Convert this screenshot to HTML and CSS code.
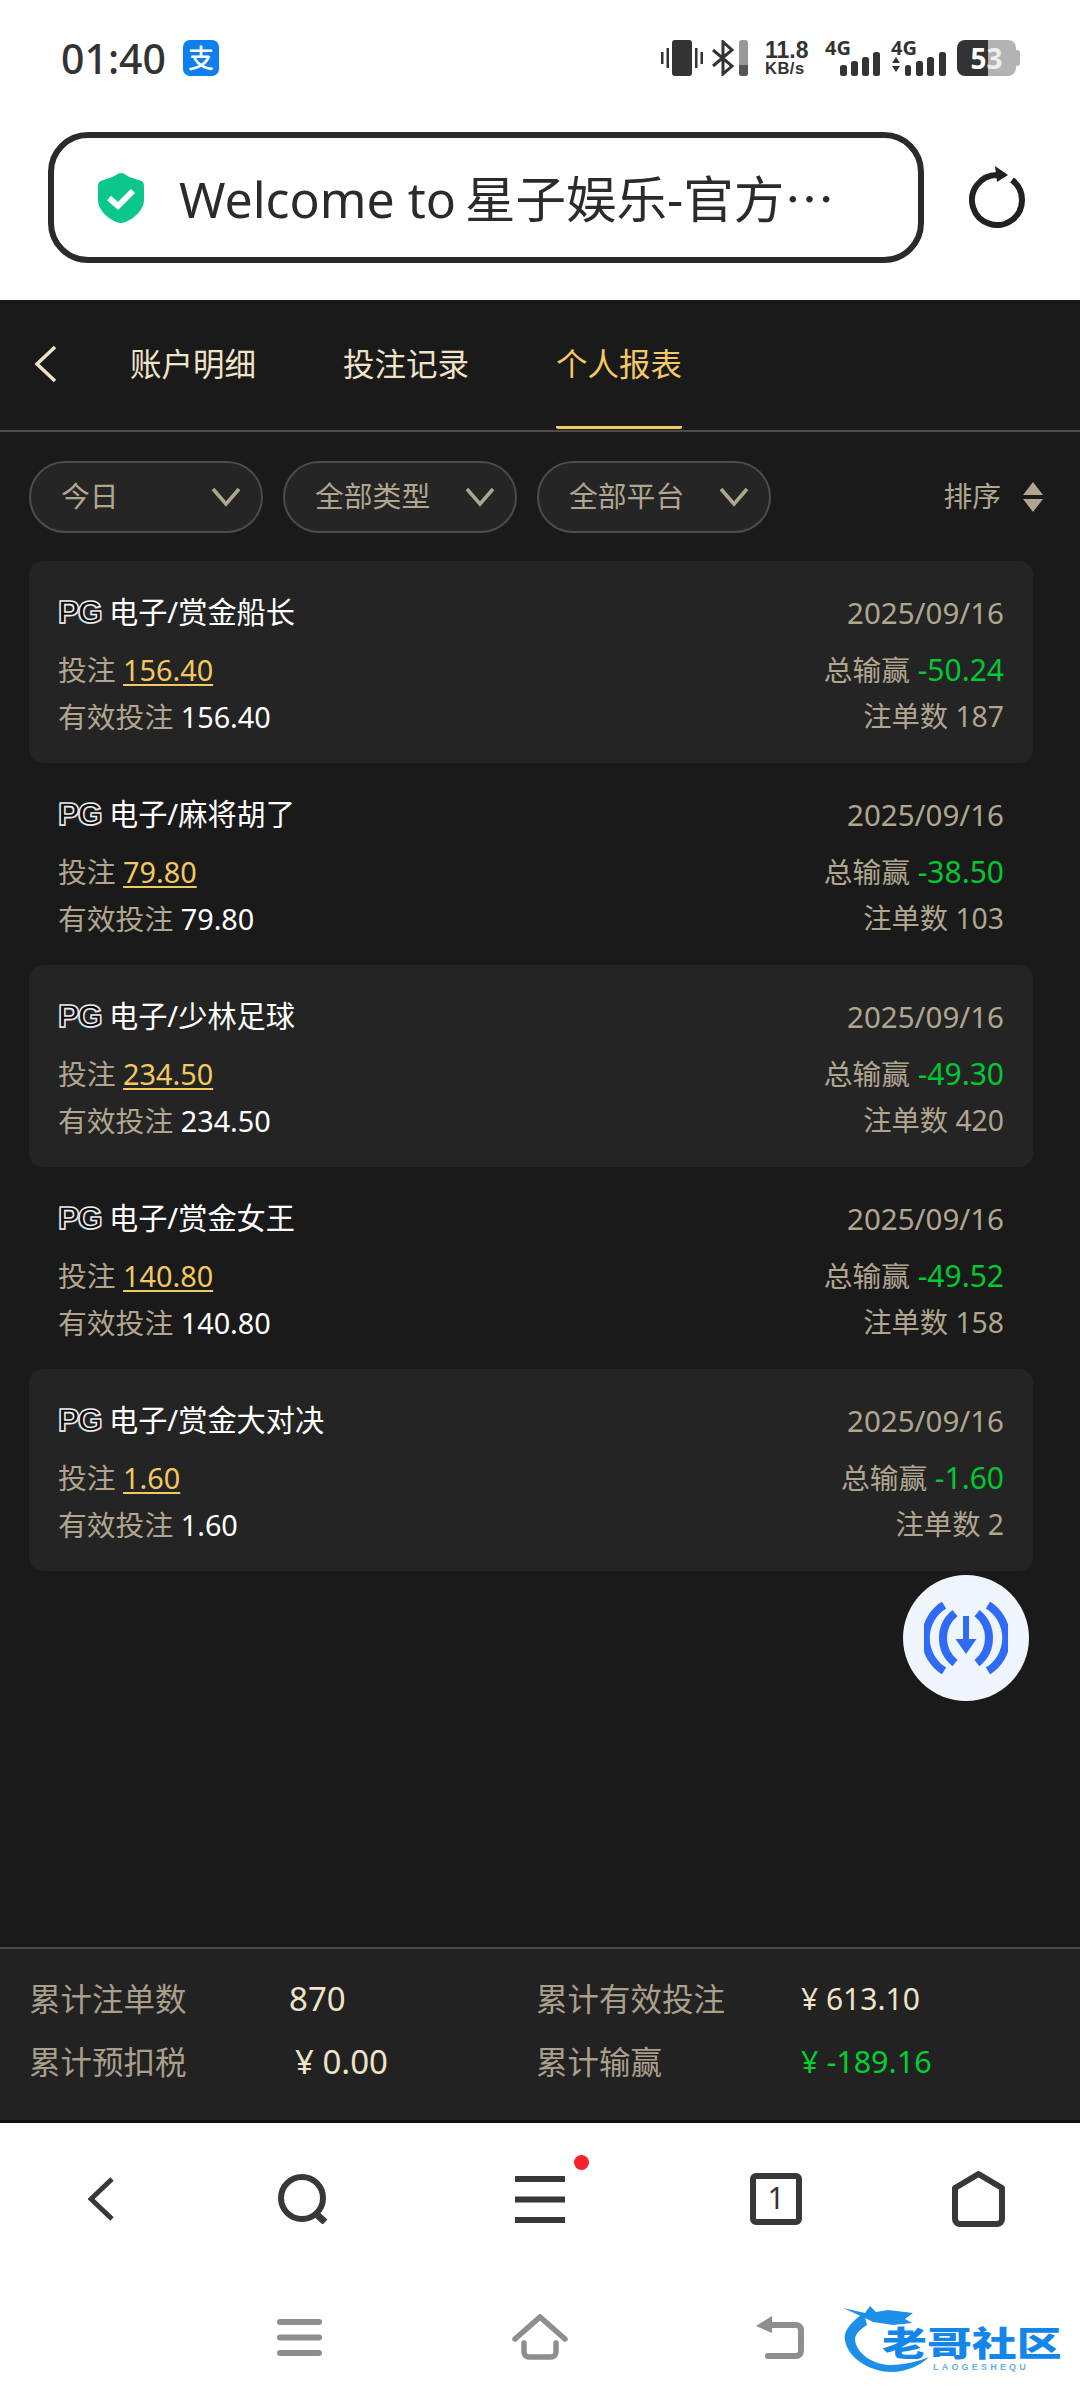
FILE: index.html
```html
<!DOCTYPE html>
<html lang="zh">
<head>
<meta charset="utf-8">
<title>个人报表</title>
<link rel="stylesheet" href="styles.css">
</head>
<body>
<div class="phone">
  <header class="status">
    <div class="status-left">
      <span class="time">01:40</span>
      <span class="alipay">支</span>
    </div>
    <div class="status-right">
      <svg class="ic-vib" width="42" height="36" viewBox="0 0 42 36"><rect x="11" y="0" width="20" height="36" rx="3" fill="#333"/><rect x="0" y="12" width="2.5" height="12" fill="#333"/><rect x="5.5" y="8" width="2.5" height="20" fill="#333"/><rect x="34" y="8" width="2.5" height="20" fill="#333"/><rect x="39.5" y="12" width="2.5" height="12" fill="#333"/></svg>
      <svg class="ic-bt" width="36" height="36" viewBox="0 0 36 36"><path d="M1 10 L20 26 L11 34 V2 L20 10 L1 26" fill="none" stroke="#333" stroke-width="3"/><rect x="27" y="0" width="9" height="36" rx="3" fill="#999"/><path d="M27 25 H36 V33 A3 3 0 0 1 33 36 H30 A3 3 0 0 1 27 33 Z" fill="#555"/></svg>
      <div class="speed"><span class="speed-num">11.8</span><span class="speed-unit">KB/s</span></div>
      <div class="sim sim-one">
        <span class="sim-label">4G</span>
        <svg class="sim-bars" width="40" height="24" viewBox="0 0 40 24"><rect x="0" y="13" width="7" height="11" rx="2.5" fill="#333"/><rect x="11" y="9" width="7" height="15" rx="2.5" fill="#333"/><rect x="22" y="5" width="7" height="19" rx="2.5" fill="#333"/><rect x="33" y="0" width="7" height="24" rx="2.5" fill="#333"/></svg>
      </div>
      <div class="sim sim-two">
        <span class="sim-label">4G</span>
        <svg class="sim-bars" width="55" height="24" viewBox="0 0 55 24"><path d="M1 11 L5 5 L9 11Z M1 14 H9 L5 20Z" fill="#333"/><rect x="14" y="13" width="6" height="11" rx="2.5" fill="#333"/><rect x="25" y="9" width="7" height="15" rx="2.5" fill="#333"/><rect x="36" y="5" width="7" height="19" rx="2.5" fill="#333"/><rect x="48" y="0" width="7" height="24" rx="2.5" fill="#333"/></svg>
      </div>
      <div class="battery"><span class="bat-five">5</span><span class="bat-three">3</span></div>
    </div>
  </header>

  <div class="urlrow">
    <div class="urlbox">
      <svg class="shield" width="46" height="50" viewBox="0 0 46 50"><path d="M23 0 C26 0 29 3 33 4.500 L42 7.500 C45 8.500 46 10 46 13 V27 C46 38 34 47 26 49.500 C24 50.200 22 50.200 20 49.500 C12 47 0 38 0 27 V13 C0 10 1 8.500 4 7.500 L13 4.500 C17 3 20 0 23 0Z" fill="#0cc78c"/><path d="M11 25 L20 33 L35 18" fill="none" stroke="#fff" stroke-width="6"/></svg>
      <span class="urltext">Welcome to<span class="url-cjk">星子娱乐-官方</span><span class="dots">⋯</span></span>
    </div>
    <svg class="reload" width="56" height="62" viewBox="0 0 56 62"><path d="M43 14 A25 25 0 1 1 28 9" fill="none" stroke="#222" stroke-width="6"/><path d="M26 0 L39 9 L28 16Z" fill="#222"/></svg>
  </div>

  <main class="app">
    <nav class="tabs">
      <svg class="tab-back" width="24" height="38" viewBox="0 0 24 38"><path d="M21 2 L3 19 L21 36" fill="none" stroke="#f0e4c4" stroke-width="3.500"/></svg>
      <span class="tab">账户明细</span>
      <span class="tab">投注记录</span>
      <span class="tab tab-active">个人报表</span>
    </nav>

    <div class="filters">
      <div class="pill"><span>今日</span><svg class="chev" width="30" height="20" viewBox="0 0 30 20"><path d="M2 2 L15 17 L28 2" fill="none" stroke="#b0a690" stroke-width="3.500"/></svg></div>
      <div class="pill"><span>全部类型</span><svg class="chev" width="30" height="20" viewBox="0 0 30 20"><path d="M2 2 L15 17 L28 2" fill="none" stroke="#b0a690" stroke-width="3.500"/></svg></div>
      <div class="pill"><span>全部平台</span><svg class="chev" width="30" height="20" viewBox="0 0 30 20"><path d="M2 2 L15 17 L28 2" fill="none" stroke="#b0a690" stroke-width="3.500"/></svg></div>
      <div class="sort"><span class="sort-text">排序</span><svg width="20" height="30" viewBox="0 0 20 30"><path d="M10 0 L20 13 H0Z M0 17 H20 L10 30Z" fill="#b0a690"/></svg></div>
    </div>

    <section class="list">
      <article class="card card-alt">
        <div class="row row-title"><div class="game"><span class="pg">PG</span><span>电子/赏金船长</span></div><span class="date">2025/09/16</span></div>
        <div class="row"><span>投注 <u class="bet">156.40</u></span><span>总输赢 <span class="loss">-50.24</span></span></div>
        <div class="row"><span>有效投注 <span class="valid">156.40</span></span><span class="count">注单数 187</span></div>
      </article>
      <article class="card">
        <div class="row row-title"><div class="game"><span class="pg">PG</span><span>电子/麻将胡了</span></div><span class="date">2025/09/16</span></div>
        <div class="row"><span>投注 <u class="bet">79.80</u></span><span>总输赢 <span class="loss">-38.50</span></span></div>
        <div class="row"><span>有效投注 <span class="valid">79.80</span></span><span class="count">注单数 103</span></div>
      </article>
      <article class="card card-alt">
        <div class="row row-title"><div class="game"><span class="pg">PG</span><span>电子/少林足球</span></div><span class="date">2025/09/16</span></div>
        <div class="row"><span>投注 <u class="bet">234.50</u></span><span>总输赢 <span class="loss">-49.30</span></span></div>
        <div class="row"><span>有效投注 <span class="valid">234.50</span></span><span class="count">注单数 420</span></div>
      </article>
      <article class="card">
        <div class="row row-title"><div class="game"><span class="pg">PG</span><span>电子/赏金女王</span></div><span class="date">2025/09/16</span></div>
        <div class="row"><span>投注 <u class="bet">140.80</u></span><span>总输赢 <span class="loss">-49.52</span></span></div>
        <div class="row"><span>有效投注 <span class="valid">140.80</span></span><span class="count">注单数 158</span></div>
      </article>
      <article class="card card-alt">
        <div class="row row-title"><div class="game"><span class="pg">PG</span><span>电子/赏金大对决</span></div><span class="date">2025/09/16</span></div>
        <div class="row"><span>投注 <u class="bet">1.60</u></span><span>总输赢 <span class="loss">-1.60</span></span></div>
        <div class="row"><span>有效投注 <span class="valid">1.60</span></span><span class="count">注单数 2</span></div>
      </article>
    </section>

    <div class="fab">
      <svg width="84" height="72" viewBox="0 0 84 72"><g fill="none" stroke="#2f6bf5" stroke-width="8"><path d="M20 3 A39 39 0 0 0 20 69"/><path d="M31 11 A32 32 0 0 0 31 61"/><path d="M64 3 A39 39 0 0 1 64 69"/><path d="M53 11 A32 32 0 0 1 53 61"/></g><path d="M39 14 H45 V37 H52.500 L42 52 L31.500 37 H39Z" fill="#2f6bf5"/></svg>
    </div>

    <footer class="totals">
      <span class="t-label">累计注单数</span><span class="t-val t-big">870</span><span class="t-label">累计有效投注</span><span class="t-val">¥ 613.10</span>
      <span class="t-label">累计预扣税</span><span class="t-val t-big t-tax">¥ 0.00</span><span class="t-label">累计输赢</span><span class="t-val t-loss">¥ -189.16</span>
    </footer>
  </main>

  <nav class="browser-nav">
    <div class="nav-cell"><svg width="26" height="44" viewBox="0 0 26 44"><path d="M24 2 L3 22 L24 42" fill="none" stroke="#383838" stroke-width="5"/></svg></div>
    <div class="nav-cell"><svg width="50" height="50" viewBox="0 0 50 50"><circle cx="24" cy="24" r="21" fill="none" stroke="#383838" stroke-width="6"/><path d="M36 38 L47 48" stroke="#383838" stroke-width="7"/></svg></div>
    <div class="nav-cell nav-menu"><svg width="50" height="47" viewBox="0 0 50 47"><path d="M0 3 H50 M0 23.500 H50 M0 44 H50" stroke="#383838" stroke-width="6"/></svg><span class="red-dot"></span></div>
    <div class="nav-cell"><div class="tabcount">1</div></div>
    <div class="nav-cell"><svg width="53" height="56" viewBox="0 0 53 56"><path d="M26.500 3 L50 17 V48 A5 5 0 0 1 45 53 H8 A5 5 0 0 1 3 48 V17Z" fill="none" stroke="#383838" stroke-width="6" stroke-linejoin="round"/></svg></div>
  </nav>

  <nav class="sys-nav">
    <div class="nav-cell"><svg width="45" height="37" viewBox="0 0 45 37"><path d="M3 3 H42 M3 18.500 H42 M3 34 H42" stroke="#8e8e8e" stroke-width="6" stroke-linecap="round"/></svg></div>
    <div class="nav-cell"><svg width="56" height="46" viewBox="0 0 56 46"><path d="M3 25 L28 3 L53 25" fill="none" stroke="#8e8e8e" stroke-width="5.500" stroke-linecap="round"/><path d="M12 29 V38 A5 5 0 0 0 17 43 H39 A5 5 0 0 0 44 38 V29" fill="none" stroke="#8e8e8e" stroke-width="5.500" stroke-linecap="round"/></svg></div>
    <div class="nav-cell"><svg width="48" height="43" viewBox="0 0 48 43"><path d="M16 9 H40 A5 5 0 0 1 45 14 V35 A5 5 0 0 1 40 40 H12" fill="none" stroke="#8e8e8e" stroke-width="6" stroke-linecap="round"/><path d="M16 0 V17 L0 10Z" fill="#8e8e8e"/></svg></div>
    <div class="logo">
      <svg class="logo-dragon" width="220" height="67" viewBox="0 0 220 67"><path d="M21 8 C6 18 0 28 2 35 C5 55 30 67 48 67 C64 67 78 60 86 52 C76 56 62 60 48 60 C32 60 14 50 12 35 C12 28 18 24 24 20Z" fill="#1e8fe8"/><path d="M0 3 L22 8 L27 1 L33 7 L45 5 L70 8 L62 14 L69 18 L50 20 L30 17 L20 12Z" fill="#1e8fe8"/></svg>
      <span class="logo-name">老哥社区</span>
      <span class="logo-sub">LAOGESHEQU</span>
    </div>
  </nav>
</div>
</body>
</html>
```
FILE: styles.css
```css
* { box-sizing: border-box; }
html, body { margin: 0; padding: 0; }
body { font-family: "Noto Sans", "Noto Sans CJK SC", sans-serif; background: #fff; }
.phone { position: relative; width: 1080px; height: 2400px; display: flex; flex-direction: column; overflow: hidden; }

.status { height: 116px; flex: none; display: flex; justify-content: space-between; padding: 40px 64px 0 61px; align-items: flex-start; }
.status-left { display: flex; align-items: center; gap: 17px; height: 36px; }
.time { font-size: 41px; font-weight: 500; color: #333; line-height: 36px; }
.alipay { width: 36px; height: 36px; border-radius: 7px; background: #0f7ff0; color: #fff; font-size: 26px; font-weight: 500; line-height: 36px; text-align: center; }
.status-right { display: flex; align-items: flex-start; height: 36px; }
.status-right svg { display: block; }
.ic-vib { margin-right: 9px; }
.speed { display: flex; flex-direction: column; width: 60px; margin-left: 17px; color: #333; font-family: "Liberation Sans", sans-serif; font-weight: 700; }
.speed-num { font-size: 23px; line-height: 20px; }
.speed-unit { font-size: 16.5px; line-height: 16px; letter-spacing: .5px; }
.sim { position: relative; height: 36px; }
.sim-label { display: block; font-size: 20px; font-weight: 700; line-height: 16px; color: #333; }
.sim-bars { position: absolute; right: 0; bottom: 0; }
.sim-one { width: 55px; }
.sim-two { width: 55px; margin-left: 11px; }
.battery { position: relative; width: 59px; height: 36px; margin-left: 11px; border-radius: 8px; background: linear-gradient(90deg, #333 31px, #b3b3b3 31px); display: flex; justify-content: center; font-size: 28px; font-weight: 700; line-height: 36px; }
.battery::after { content: ""; position: absolute; left: 59px; top: 10px; width: 4px; height: 16px; border-radius: 0 3px 3px 0; background: #b3b3b3; }
.bat-five { color: #fff; }
.bat-three { color: #eee; }

.urlrow { height: 184px; flex: none; display: flex; align-items: flex-start; padding: 16px 0 0 48px; }
.urlbox { width: 876px; height: 131px; border: 6px solid #2b2b2b; border-radius: 40px; display: flex; align-items: center; padding-left: 44px; }
.shield { flex: none; margin-right: 35px; }
.urltext { font-size: 50px; color: #2b2b2b; white-space: nowrap; line-height: 60px; }
.url-cjk { font-size: 50.5px; margin-left: 9px; }
.dots { font-family: "Noto Sans CJK SC", sans-serif; }
.reload { margin: 34px 0 0 45px; }

.app { position: relative; flex: none; height: 1823px; background: #1a1a1a; display: flex; flex-direction: column; }
.tabs { position: relative; height: 132px; flex: none; display: flex; align-items: flex-start; border-bottom: 2px solid #4f4d49; }
.tab-back { position: absolute; left: 34px; top: 45px; }
.tab { font-size: 31.5px; color: #efe3c8; line-height: 40px; margin-top: 44px; }
.tab:nth-of-type(1) { margin-left: 130px; }
.tab:nth-of-type(2) { margin-left: 87px; }
.tab:nth-of-type(3) { margin-left: 87px; }
.tab-active { color: #f5c966; height: 85px; border-bottom: 3px solid #f5c966; border-radius: 0 0 2px 2px; }

.filters { flex: none; display: flex; align-items: center; height: 72px; margin-top: 29px; padding: 0 37px 0 29px; gap: 20px; }
.pill { width: 234px; height: 72px; border: 2px solid #4e4c48; border-radius: 36px; background: #252525; display: flex; justify-content: space-between; align-items: center; padding: 0 20px 6px 30px; color: #b0a690; font-size: 28.8px; }
.chev { margin-top: 6px; }
.sort { margin-left: auto; display: flex; align-items: center; gap: 22px; color: #b0a690; font-size: 28.8px; }
.sort-text { margin-bottom: 5px; }

.list { flex: none; margin: 28px 47px 0 29px; }
.card { height: 202px; padding: 29px 29px 22px; border-radius: 14px; font-size: 28.8px; line-height: 47px; color: #b0a690; }
.card-alt { background: #242424; }
.row { display: flex; justify-content: space-between; height: 47px; }
.row-title { margin-bottom: 10px; margin-top: -1px; }
.game { display: flex; align-items: center; color: #fff; font-size: 29.2px; }
.pg { width: 51px; font-family: "Liberation Sans", sans-serif; font-size: 32px; font-weight: 700; color: #0b0b0b; -webkit-text-stroke: 1.4px #eee; letter-spacing: -1.5px; text-shadow: -1px 1px 0 rgba(90,200,240,.7), 1px 1px 0 rgba(240,100,140,.7); }
.date { font-size: 29.5px; }
.count { font-size: 28.3px; }
.bet { color: #f2c95e; text-underline-offset: 3px; }
.valid { color: #fff; }
.loss { color: #00c832; font-size: 30px; }

.fab { position: absolute; left: 903px; top: 1275px; width: 126px; height: 126px; border-radius: 50%; background: #f0f4fd; display: flex; align-items: center; justify-content: center; }

.totals { margin-top: auto; height: 176px; flex: none; background: #222; border-top: 2px solid #4a4a4a; border-bottom: 3px solid #111; display: grid; grid-template-columns: 260px 247px 265px 1fr; grid-template-rows: 63px 63px; align-content: start; padding: 18px 0 0 29px; font-size: 31.5px; line-height: 63px; }
.t-label { color: #a99f8b; }
.t-val { color: #efe3c8; font-size: 30px; }
.t-big { font-size: 33px; }
.t-tax { padding-left: 6px; }
.t-loss { color: #00d030; font-size: 30.5px; }

.browser-nav { height: 152px; flex: none; display: grid; grid-template-columns: 202px 202px 272px 200px 204px; align-items: center; background: #fff; }
.nav-cell { display: flex; align-items: center; justify-content: center; }
.nav-cell svg { display: block; }
.nav-menu { position: relative; }
.red-dot { position: absolute; left: 170px; top: -21px; width: 15px; height: 15px; border-radius: 50%; background: #f5222d; }
.tabcount { width: 52px; height: 52px; border: 6px solid #383838; border-radius: 6px; color: #333; font-size: 30px; line-height: 38px; text-align: center; }

.sys-nav { position: relative; height: 125px; flex: none; display: grid; grid-template-columns: 238px 244px 236px; align-items: center; padding: 0 0 1px 180px; background: #fff; }
.logo { position: absolute; left: 843px; top: 30px; width: 220px; height: 67px; }
.logo-dragon { position: absolute; left: 0; top: 0; }
.logo-name { position: absolute; left: 39px; top: 20px; font-family: "Noto Sans CJK SC", sans-serif; font-size: 34px; font-weight: 900; line-height: 34px; color: #1486ea; white-space: nowrap; transform: scaleX(1.32); transform-origin: left center; }
.logo-sub { position: absolute; left: 90px; top: 57px; font-family: "Liberation Sans", sans-serif; font-size: 9px; font-weight: 700; line-height: 10px; letter-spacing: 3.2px; color: #6aaee8; }
```
